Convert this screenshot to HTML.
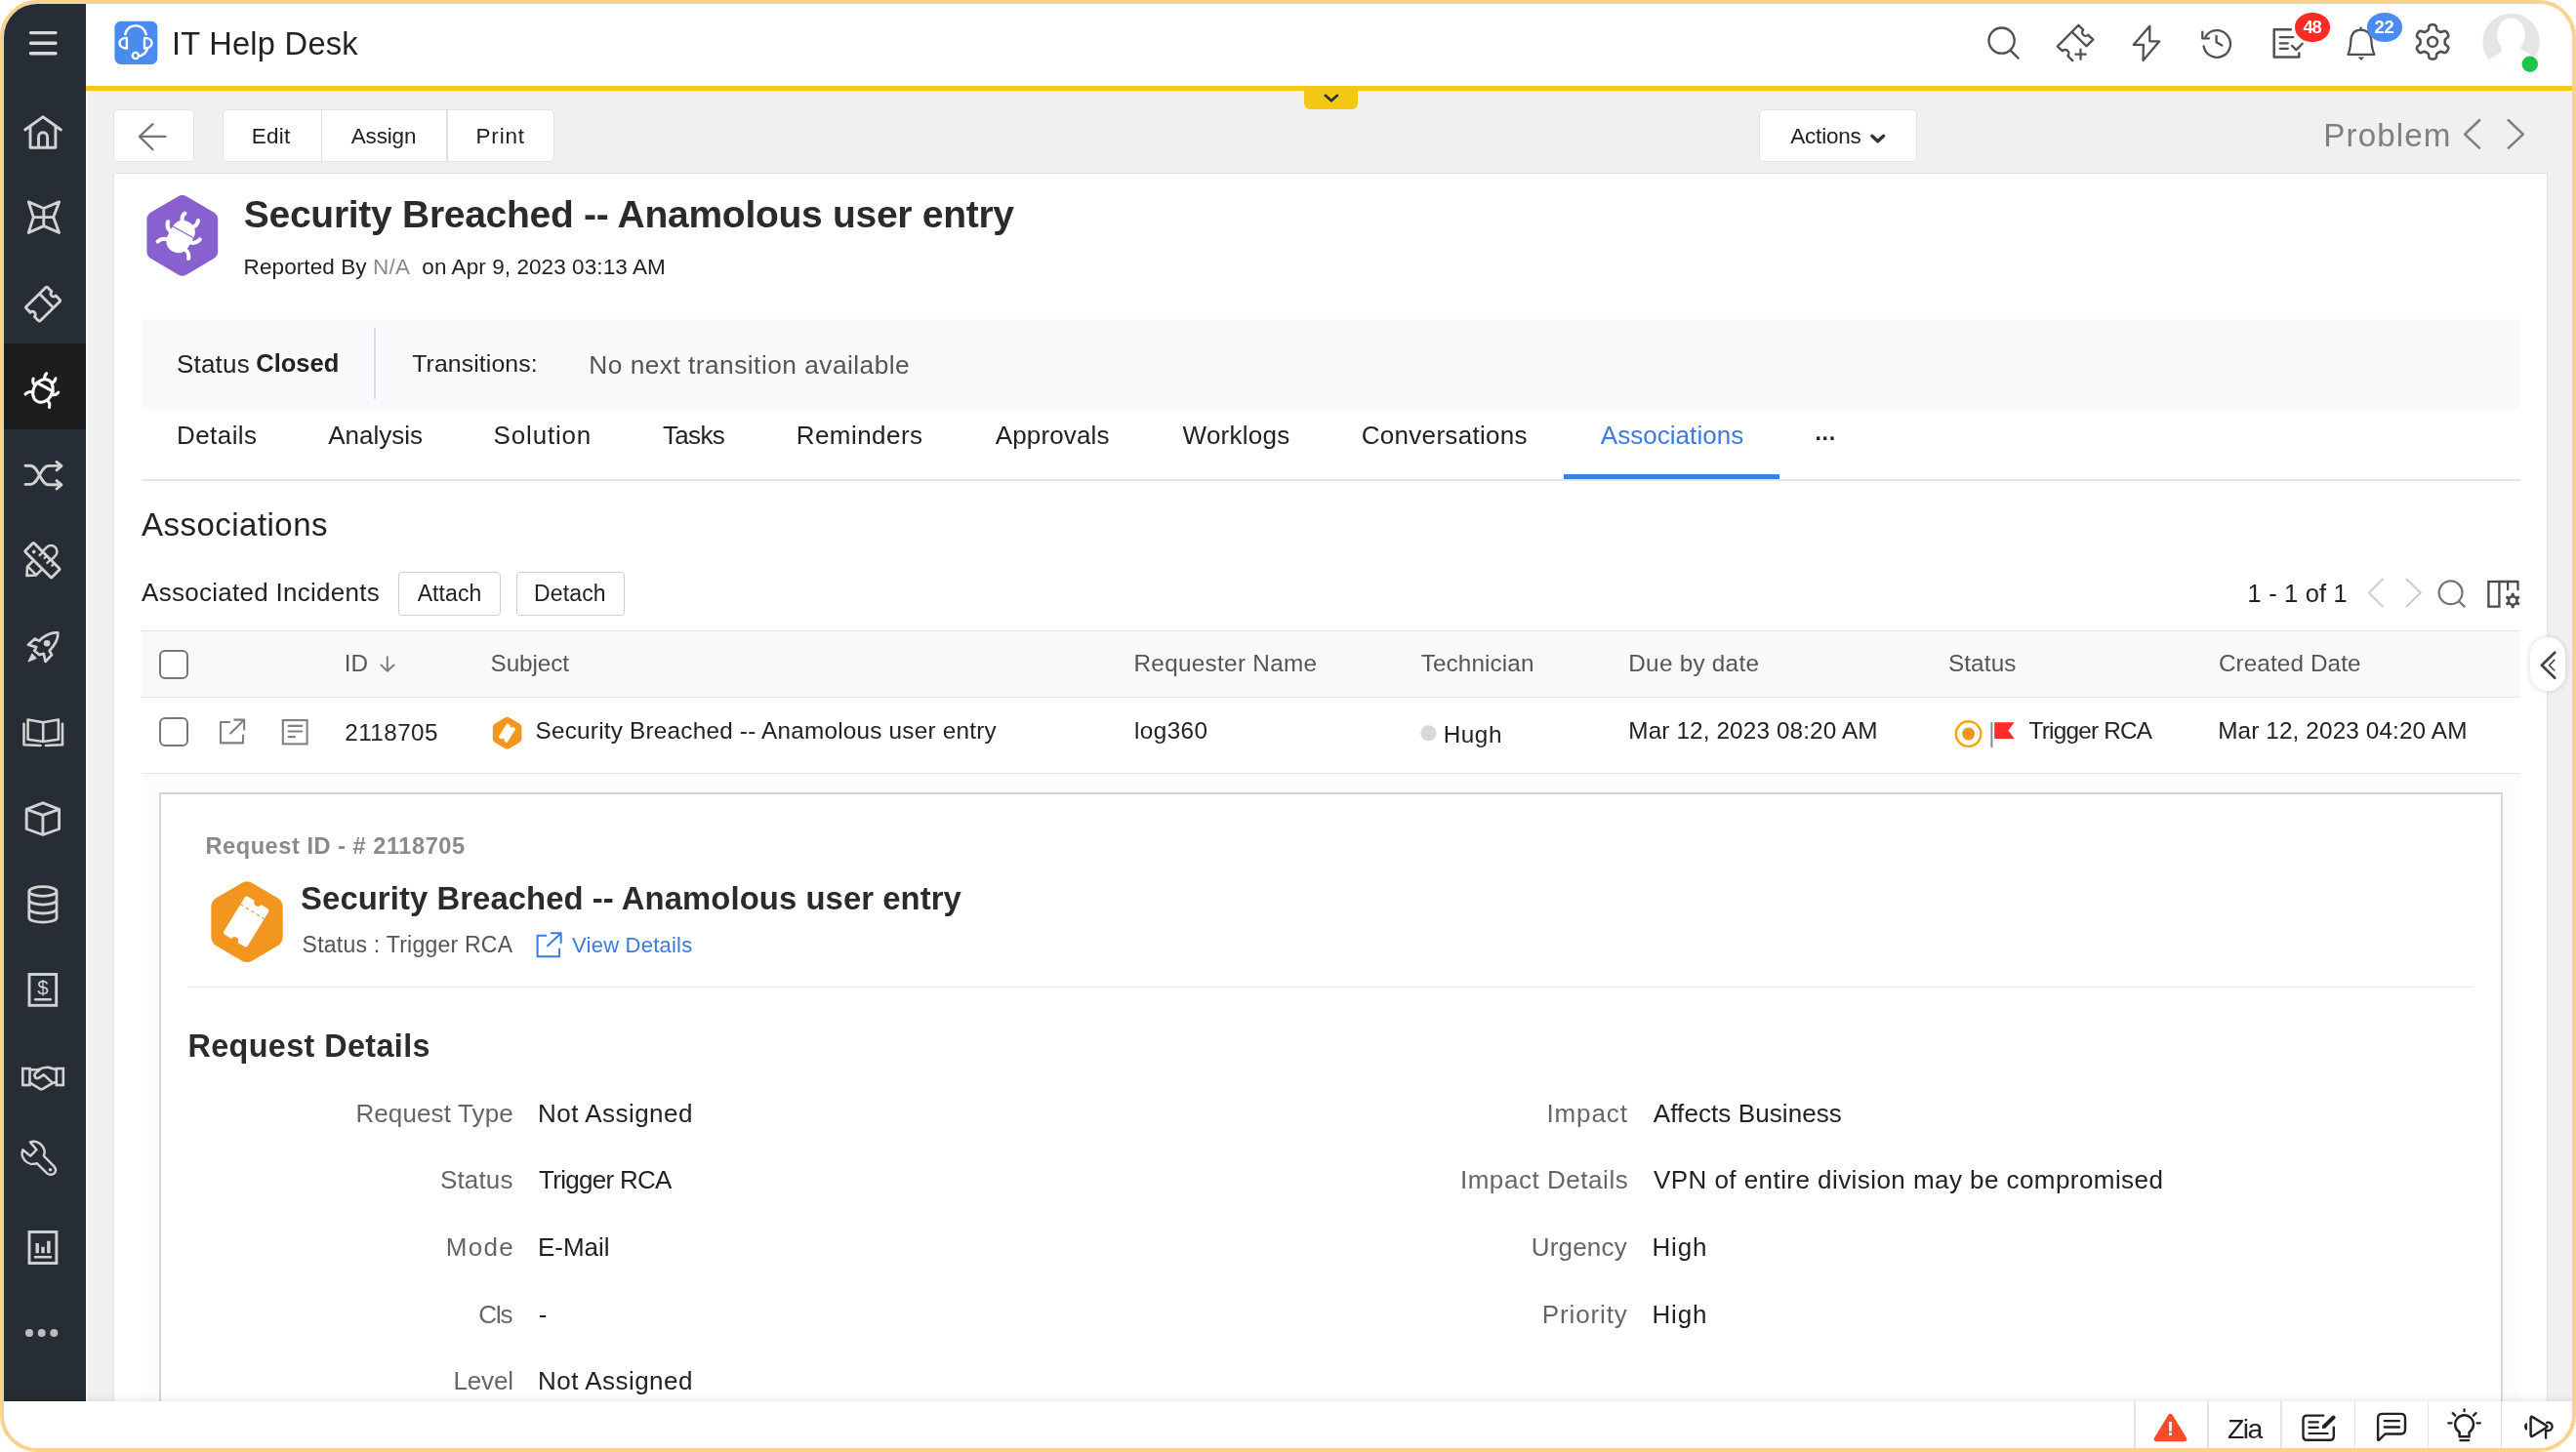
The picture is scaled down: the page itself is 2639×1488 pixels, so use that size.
<!DOCTYPE html>
<html lang="en"><head><meta charset="utf-8"><title>IT Help Desk - Problem</title>
<style>
html,body{margin:0;padding:0;background:#fff;}
body{width:2639px;height:1488px;overflow:hidden;position:relative;font-family:"Liberation Sans",sans-serif;}
#frame{position:absolute;left:0;top:0;width:2639px;height:1488px;box-sizing:border-box;border:4px solid #f9d28e;border-radius:38px;overflow:hidden;background:#f0f0f0;}
#in{position:absolute;left:-4px;top:-4px;width:2639px;height:1488px;will-change:transform;}
.t{position:absolute;white-space:nowrap;}
.b{position:absolute;box-sizing:border-box;}
.i{position:absolute;overflow:visible;}
</style></head>
<body>
<div id="frame"><div id="in">
<div class="b" style="left:0px;top:0px;width:87.7px;height:1436px;background:#262d35;"></div>
<div class="b" style="left:87.7px;top:93.5px;width:2.0px;height:1342.5px;background:#fbfbfb;"></div>
<div class="b" style="left:4px;top:352px;width:84px;height:88px;background:#1b1d1e;"></div>
<div class="b" style="left:88px;top:0px;width:2551px;height:88px;background:#fff;"></div>
<div class="b" style="left:88px;top:88px;width:2551px;height:5.299999999999997px;background:#f4c814;"></div>
<div class="b" style="left:1336px;top:93px;width:55px;height:19px;background:#f4c814;border-radius:0 0 6px 6px;"></div>
<div class="b" style="left:116px;top:177px;width:2494px;height:1263px;background:#fff;border:1.5px solid #e3e3e3;"></div>
<div class="b" style="left:116px;top:112px;width:83px;height:54px;background:#fff;border:1.5px solid #e2e2e2;border-radius:5px;"></div>
<div class="b" style="left:228px;top:112px;width:340px;height:54px;background:#fff;border:1.5px solid #e2e2e2;border-radius:5px;"></div>
<div class="b" style="left:328.5px;top:113px;width:1.5px;height:52px;background:#e2e2e2;"></div>
<div class="b" style="left:457px;top:113px;width:1.5px;height:52px;background:#e2e2e2;"></div>
<div class="b" style="left:1802px;top:112px;width:162px;height:54px;background:#fff;border:1.5px solid #e2e2e2;border-radius:5px;"></div>
<div class="b" style="left:145px;top:327px;width:2437px;height:91.5px;background:#f8f9fb;"></div>
<div class="b" style="left:383px;top:336px;width:1.5px;height:73px;background:#dcdde0;"></div>
<div class="b" style="left:145px;top:490.5px;width:2437px;height:2.0px;background:#e6e6e6;"></div>
<div class="b" style="left:1602px;top:486px;width:221px;height:4.5px;background:#3b7fe4;"></div>
<div class="b" style="left:145px;top:646px;width:2437px;height:68.5px;background:#f8f9fb;border-top:1.5px solid #e3e4e6;border-bottom:1.5px solid #e3e4e6;"></div>
<div class="b" style="left:145px;top:791.5px;width:2437px;height:1.5px;background:#e6e6e6;"></div>
<div class="b" style="left:145px;top:793px;width:2437px;height:647px;background:#fcfcfc;"></div>
<div class="b" style="left:163px;top:812px;width:2400.5px;height:633px;background:#fff;border:2px solid #d6d6d6;"></div>
<div class="b" style="left:193px;top:1010.5px;width:2341px;height:1.5px;background:#e6e6e6;"></div>
<div class="b" style="left:407.5px;top:586px;width:105.0px;height:44.5px;background:#fff;border:1.5px solid #cfcfcf;border-radius:4px;"></div>
<div class="b" style="left:528.5px;top:586px;width:111.5px;height:44.5px;background:#fff;border:1.5px solid #cfcfcf;border-radius:4px;"></div>
<div class="b" style="left:163px;top:666px;width:29.5px;height:29.5px;background:#fff;border:2px solid #777;border-radius:6px;"></div>
<div class="b" style="left:163px;top:735px;width:29.5px;height:29.5px;background:#fff;border:2px solid #777;border-radius:6px;"></div>
<div class="b" style="left:2592.3px;top:653px;width:35.69999999999982px;height:55.299999999999955px;background:#fff;border-radius:18px;box-shadow:0 0 6px rgba(0,0,0,.16);"></div>
<div class="b" style="left:0px;top:1436px;width:2639px;height:52px;background:#fff;box-shadow:0 -2px 7px rgba(0,0,0,.09);"></div>
<div class="b" style="left:2186.25px;top:1436px;width:1.5px;height:52px;background:#e4e4e4;"></div>
<div class="b" style="left:2261.25px;top:1436px;width:1.5px;height:52px;background:#e4e4e4;"></div>
<div class="b" style="left:2336.25px;top:1436px;width:1.5px;height:52px;background:#e4e4e4;"></div>
<div class="b" style="left:2411.75px;top:1436px;width:1.5px;height:52px;background:#e4e4e4;"></div>
<div class="b" style="left:2486.75px;top:1436px;width:1.5px;height:52px;background:#e4e4e4;"></div>
<div class="b" style="left:2561.75px;top:1436px;width:1.5px;height:52px;background:#e4e4e4;"></div>
<div class="t" style="left:175.9px;top:29.0px;font-size:32.6px;line-height:32.6px;color:#222;letter-spacing:0.28px;">IT Help Desk</div>
<div class="t" style="left:257.7px;top:129.3px;font-size:22.5px;line-height:22.5px;color:#222;letter-spacing:0.23px;">Edit</div>
<div class="t" style="left:359.7px;top:129.3px;font-size:22.5px;line-height:22.5px;color:#222;letter-spacing:-0.15px;">Assign</div>
<div class="t" style="left:487.6px;top:129.3px;font-size:22.5px;line-height:22.5px;color:#222;letter-spacing:0.77px;">Print</div>
<div class="t" style="left:1834.2px;top:129.0px;font-size:22.5px;line-height:22.5px;color:#222;letter-spacing:-0.19px;">Actions</div>
<div class="t" style="left:2380.3px;top:122.1px;font-size:33.2px;line-height:33.2px;color:#808080;letter-spacing:1.09px;">Problem</div>
<div class="t" style="left:249.8px;top:199.6px;font-size:39px;line-height:39px;color:#2b2b2b;letter-spacing:-0.28px;font-weight:700;">Security Breached -- Anamolous user entry</div>
<div class="t" style="left:249.6px;top:263.0px;font-size:22.5px;line-height:22.5px;color:#222;letter-spacing:0.09px;">Reported By</div>
<div class="t" style="left:382.0px;top:263.0px;font-size:22.5px;line-height:22.5px;color:#8a8a8a;letter-spacing:0.22px;">N/A</div>
<div class="t" style="left:432.3px;top:263.0px;font-size:22.5px;line-height:22.5px;color:#222;letter-spacing:0.08px;">on Apr 9, 2023 03:13 AM</div>
<div class="t" style="left:180.9px;top:359.6px;font-size:26px;line-height:26px;color:#222;letter-spacing:0.21px;">Status</div>
<div class="t" style="left:262.3px;top:360.0px;font-size:25.5px;line-height:25.5px;color:#222;letter-spacing:-0.01px;font-weight:700;">Closed</div>
<div class="t" style="left:422.3px;top:360.6px;font-size:24.8px;line-height:24.8px;color:#222;letter-spacing:0.10px;">Transitions:</div>
<div class="t" style="left:603.3px;top:360.7px;font-size:26.3px;line-height:26.3px;color:#555;letter-spacing:0.47px;">No next transition available</div>
<div class="t" style="left:181.0px;top:433.4px;font-size:26px;line-height:26px;color:#222;letter-spacing:0.43px;">Details</div>
<div class="t" style="left:336.3px;top:433.4px;font-size:26px;line-height:26px;color:#222;letter-spacing:-0.02px;">Analysis</div>
<div class="t" style="left:505.6px;top:433.4px;font-size:26px;line-height:26px;color:#222;letter-spacing:0.82px;">Solution</div>
<div class="t" style="left:679.0px;top:433.4px;font-size:26px;line-height:26px;color:#222;letter-spacing:-0.67px;">Tasks</div>
<div class="t" style="left:815.7px;top:433.4px;font-size:26px;line-height:26px;color:#222;letter-spacing:0.45px;">Reminders</div>
<div class="t" style="left:1019.8px;top:433.4px;font-size:26px;line-height:26px;color:#222;letter-spacing:0.13px;">Approvals</div>
<div class="t" style="left:1211.6px;top:433.4px;font-size:26px;line-height:26px;color:#222;letter-spacing:0.24px;">Worklogs</div>
<div class="t" style="left:1394.7px;top:433.4px;font-size:26px;line-height:26px;color:#222;letter-spacing:0.31px;">Conversations</div>
<div class="t" style="left:1639.8px;top:433.4px;font-size:26px;line-height:26px;color:#3a7be0;letter-spacing:0.04px;">Associations</div>
<div class="t" style="left:1859.5px;top:432.0px;font-size:23px;line-height:23px;color:#222;letter-spacing:0.70px;font-weight:700;">...</div>
<div class="t" style="left:145.1px;top:521.1px;font-size:33px;line-height:33px;color:#222;letter-spacing:0.47px;">Associations</div>
<div class="t" style="left:145.1px;top:594.3px;font-size:26px;line-height:26px;color:#222;letter-spacing:0.27px;">Associated Incidents</div>
<div class="t" style="left:427.7px;top:596.9px;font-size:23px;line-height:23px;color:#222;letter-spacing:0.07px;">Attach</div>
<div class="t" style="left:547.0px;top:596.9px;font-size:23px;line-height:23px;color:#222;letter-spacing:0.15px;">Detach</div>
<div class="t" style="left:2302.6px;top:595.8px;font-size:25.5px;line-height:25.5px;color:#222;letter-spacing:0.17px;">1 - 1 of 1</div>
<div class="t" style="left:352.8px;top:667.6px;font-size:24.3px;line-height:24.3px;color:#555;letter-spacing:-0.02px;">ID</div>
<div class="t" style="left:502.5px;top:668.4px;font-size:24.3px;line-height:24.3px;color:#555;letter-spacing:-0.07px;">Subject</div>
<div class="t" style="left:1161.5px;top:668.4px;font-size:24.3px;line-height:24.3px;color:#555;letter-spacing:0.30px;">Requester Name</div>
<div class="t" style="left:1455.7px;top:668.4px;font-size:24.3px;line-height:24.3px;color:#555;letter-spacing:0.11px;">Technician</div>
<div class="t" style="left:1668.3px;top:668.4px;font-size:24.3px;line-height:24.3px;color:#555;letter-spacing:0.26px;">Due by date</div>
<div class="t" style="left:1995.9px;top:668.4px;font-size:24.3px;line-height:24.3px;color:#555;letter-spacing:0.13px;">Status</div>
<div class="t" style="left:2272.9px;top:668.4px;font-size:24.3px;line-height:24.3px;color:#555;letter-spacing:0.11px;">Created Date</div>
<div class="t" style="left:353.3px;top:738.9px;font-size:24.3px;line-height:24.3px;color:#222;letter-spacing:0.41px;">2118705</div>
<div class="t" style="left:548.6px;top:737.1px;font-size:24.3px;line-height:24.3px;color:#222;letter-spacing:0.22px;">Security Breached -- Anamolous user entry</div>
<div class="t" style="left:1162.1px;top:737.0px;font-size:24.3px;line-height:24.3px;color:#222;letter-spacing:0.37px;">log360</div>
<div class="t" style="left:1478.7px;top:740.6px;font-size:24.3px;line-height:24.3px;color:#222;letter-spacing:0.54px;">Hugh</div>
<div class="t" style="left:1668.3px;top:737.1px;font-size:24.3px;line-height:24.3px;color:#222;letter-spacing:0.13px;">Mar 12, 2023 08:20 AM</div>
<div class="t" style="left:2078.5px;top:737.1px;font-size:24.3px;line-height:24.3px;color:#222;letter-spacing:-0.76px;">Trigger RCA</div>
<div class="t" style="left:2272.2px;top:737.1px;font-size:24.3px;line-height:24.3px;color:#222;letter-spacing:0.13px;">Mar 12, 2023 04:20 AM</div>
<div class="t" style="left:210.5px;top:856.2px;font-size:23.6px;line-height:23.6px;color:#8a8a8a;letter-spacing:0.53px;font-weight:700;">Request ID - # 2118705</div>
<div class="t" style="left:308.1px;top:904.5px;font-size:32.8px;line-height:32.8px;color:#2b2b2b;letter-spacing:0.09px;font-weight:700;">Security Breached -- Anamolous user entry</div>
<div class="t" style="left:309.6px;top:957.4px;font-size:23px;line-height:23px;color:#555;letter-spacing:0.24px;">Status : Trigger RCA</div>
<div class="t" style="left:586.1px;top:958.3px;font-size:22px;line-height:22px;color:#3a7be0;letter-spacing:0.22px;">View Details</div>
<div class="t" style="left:192.4px;top:1056.2px;font-size:32.3px;line-height:32.3px;color:#2b2b2b;letter-spacing:0.42px;font-weight:700;">Request Details</div>
<div class="t" style="left:364.4px;top:1127.8px;font-size:26px;line-height:26px;color:#666;letter-spacing:0.12px;">Request Type</div>
<div class="t" style="left:451.0px;top:1196.4px;font-size:26px;line-height:26px;color:#666;letter-spacing:0.15px;">Status</div>
<div class="t" style="left:456.7px;top:1265.0px;font-size:26px;line-height:26px;color:#666;letter-spacing:1.31px;">Mode</div>
<div class="t" style="left:490.3px;top:1333.6px;font-size:26px;line-height:26px;color:#666;letter-spacing:-1.90px;">CIs</div>
<div class="t" style="left:464.4px;top:1402.4px;font-size:26px;line-height:26px;color:#666;letter-spacing:-0.10px;">Level</div>
<div class="t" style="left:551.1px;top:1127.8px;font-size:26px;line-height:26px;color:#222;letter-spacing:0.46px;">Not Assigned</div>
<div class="t" style="left:552.1px;top:1196.4px;font-size:26px;line-height:26px;color:#222;letter-spacing:-0.72px;">Trigger RCA</div>
<div class="t" style="left:551.1px;top:1265.0px;font-size:26px;line-height:26px;color:#222;letter-spacing:-0.07px;">E-Mail</div>
<div class="t" style="left:551.8px;top:1333.6px;font-size:26px;line-height:26px;color:#222;">-</div>
<div class="t" style="left:551.1px;top:1402.4px;font-size:26px;line-height:26px;color:#222;letter-spacing:0.46px;">Not Assigned</div>
<div class="t" style="left:1584.5px;top:1127.8px;font-size:26px;line-height:26px;color:#666;letter-spacing:0.87px;">Impact</div>
<div class="t" style="left:1495.9px;top:1196.4px;font-size:26px;line-height:26px;color:#666;letter-spacing:0.55px;">Impact Details</div>
<div class="t" style="left:1568.8px;top:1265.0px;font-size:26px;line-height:26px;color:#666;letter-spacing:0.18px;">Urgency</div>
<div class="t" style="left:1579.8px;top:1333.6px;font-size:26px;line-height:26px;color:#666;letter-spacing:0.87px;">Priority</div>
<div class="t" style="left:1693.8px;top:1127.8px;font-size:26px;line-height:26px;color:#222;letter-spacing:0.09px;">Affects Business</div>
<div class="t" style="left:1694.0px;top:1196.4px;font-size:26px;line-height:26px;color:#222;letter-spacing:0.44px;">VPN of entire division may be compromised</div>
<div class="t" style="left:1692.4px;top:1265.0px;font-size:26px;line-height:26px;color:#222;letter-spacing:0.90px;">High</div>
<div class="t" style="left:1692.4px;top:1333.6px;font-size:26px;line-height:26px;color:#222;letter-spacing:0.90px;">High</div>
<svg class="i" style="left:26px;top:28px;" width="36" height="32" viewBox="26 28 36 32"><path d="M31.5 33.6H57 M31.5 44.2H57 M31.5 54.8H57" fill="none" stroke="#d9d9d9" stroke-width="3.4" stroke-linecap="round" stroke-linejoin="round" /></svg>
<svg class="i" style="left:117px;top:21px;" width="45" height="46" viewBox="117 21 45 46"><rect x="117.4" y="21.8" width="43.9" height="44.1" rx="6.3" fill="#4a8bf0"/><path d="M128.2 35.3A10.9 10.9 0 0 1 149.7 35.3" fill="none" stroke="#fff" stroke-width="2.5" stroke-linecap="round" stroke-linejoin="round" /><path d="M129.9 38.9V49.5C125 49.5 122.5 47 122.5 44.2S125 38.9 129.9 38.9Z" fill="none" stroke="#fff" stroke-width="2.4" stroke-linecap="round" stroke-linejoin="round" /><path d="M148 38.9V49.5C153 49.5 155.5 47 155.5 44.2S153 38.9 148 38.9Z" fill="none" stroke="#fff" stroke-width="2.4" stroke-linecap="round" stroke-linejoin="round" /><path d="M151 50C149.5 54.5 146 57 142 57.6" fill="none" stroke="#fff" stroke-width="2.4" stroke-linecap="round" stroke-linejoin="round" /><circle cx="138.9" cy="57" r="3.1" fill="none" stroke="#fff" stroke-width="2.4"/></svg>
<svg class="i" style="left:2034px;top:24px;" width="38" height="40" viewBox="2034 24 38 40"><circle cx="2050.6" cy="41.6" r="13.1" fill="none" stroke="#505050" stroke-width="2.3"/><path d="M2059.9 51.9L2067.6 59.6" fill="none" stroke="#505050" stroke-width="2.3" stroke-linecap="round" stroke-linejoin="round" /></svg>
<svg class="i" style="left:2104px;top:22px;" width="44" height="44" viewBox="2104 22 44 44"><path d="M2123.3 62.1L2118.4 57.4A3.6 3.6 0 0 0 2112.8 52.2L2107.8 47.6L2129.3 25.8L2134.2 30.6A3.6 3.6 0 0 0 2139.3 35.8L2144.3 40.6L2137.4 47.3L2123.6 33.6" fill="none" stroke="#505050" stroke-width="2.3" stroke-linecap="round" stroke-linejoin="round" /><path d="M2131.5 50.6V60.8M2126.4 55.7H2136.6" fill="none" stroke="#505050" stroke-width="2.3" stroke-linecap="round" stroke-linejoin="round" /></svg>
<svg class="i" style="left:2180px;top:22px;" width="36" height="44" viewBox="2180 22 36 44"><path d="M2202.3 26.7L2185.7 45.9H2195.9L2195.5 62.1L2212.2 42.3H2202.3Z" fill="none" stroke="#505050" stroke-width="2.3" stroke-linecap="round" stroke-linejoin="round" /></svg>
<svg class="i" style="left:2252px;top:26px;" width="38" height="36" viewBox="2252 26 38 36"><path d="M2257.6 47.5A13.8 13.8 0 1 0 2259.7 37.3" fill="none" stroke="#505050" stroke-width="2.3" stroke-linecap="round" stroke-linejoin="round" /><path d="M2256.3 32.7V39.4H2263" fill="none" stroke="#505050" stroke-width="2.3" stroke-linecap="round" stroke-linejoin="round" /><path d="M2270.6 36.8V43.2L2276.3 46.6" fill="none" stroke="#505050" stroke-width="2.3" stroke-linecap="round" stroke-linejoin="round" /></svg>
<svg class="i" style="left:2326px;top:26px;" width="36" height="36" viewBox="2326 26 36 36"><path d="M2346.8 30.2H2329.7V58.4H2355.3V54.5" fill="none" stroke="#505050" stroke-width="2.5" stroke-linecap="round" stroke-linejoin="round" stroke-linecap="butt"/><path d="M2335.7 38.1H2349.3M2335.7 44.3H2343.8M2335.7 49.8H2343.8" fill="none" stroke="#505050" stroke-width="2.3" stroke-linecap="round" stroke-linejoin="round" /><path d="M2348 46.8L2352.3 51.1L2358.7 44.7" fill="none" stroke="#505050" stroke-width="2.3" stroke-linecap="round" stroke-linejoin="round" /></svg>
<div class="b" style="left:2351px;top:13px;width:36px;height:29.5px;border-radius:50%;background:#fb2c24;"></div>
<div class="t" style="left:2359.4px;top:18.5px;font-size:18.5px;line-height:18.5px;color:#fff;letter-spacing:-1.09px;font-weight:700;">48</div>
<svg class="i" style="left:2402px;top:24px;" width="34" height="42" viewBox="2402 24 34 42"><path d="M2418.6 30.6V28.6M2418.6 30.6C2411 30.6 2408.6 36.5 2408.3 42C2408 48 2407 52.5 2405.5 55.8H2432.4C2430.8 52.5 2429.8 48 2429.4 42C2429 36.5 2426 30.6 2418.6 30.6Z" fill="none" stroke="#505050" stroke-width="2.3" stroke-linecap="round" stroke-linejoin="round" /><path d="M2415.6 58.6H2422.2L2418.9 62Z" fill="#505050"/></svg>
<div class="b" style="left:2424.5px;top:13px;width:36px;height:29.5px;border-radius:50%;background:#4a8bf0;"></div>
<div class="t" style="left:2432.6px;top:18.5px;font-size:18.5px;line-height:18.5px;color:#fff;letter-spacing:-0.43px;font-weight:700;">22</div>
<svg class="i" style="left:2472px;top:22px;" width="40" height="42" viewBox="2472 22 40 42"><path d="M2504.7 42.9L2504.7 42.6L2504.7 42.2L2504.7 41.9L2504.7 41.6L2504.7 41.2L2504.8 40.9L2505.0 40.5L2505.4 40.1L2506.0 39.6L2506.7 39.0L2507.4 38.4L2507.9 37.8L2508.2 37.2L2508.3 36.7L2508.2 36.2L2508.1 35.8L2508.0 35.3L2507.8 34.9L2507.6 34.5L2507.3 34.1L2507.1 33.7L2506.8 33.3L2506.6 33.0L2506.3 32.6L2505.9 32.3L2505.5 32.0L2505.1 31.8L2504.4 31.8L2503.7 31.9L2502.8 32.2L2501.9 32.6L2501.2 32.8L2500.6 32.9L2500.2 32.9L2499.9 32.8L2499.6 32.6L2499.3 32.5L2499.0 32.3L2498.7 32.2L2498.4 32.0L2498.1 31.8L2497.8 31.7L2497.5 31.5L2497.3 31.3L2497.0 31.1L2496.7 30.9L2496.5 30.5L2496.3 30.0L2496.1 29.2L2496.0 28.3L2495.8 27.4L2495.6 26.6L2495.2 26.1L2494.8 25.8L2494.4 25.6L2493.9 25.5L2493.5 25.4L2493.0 25.3L2492.6 25.3L2492.1 25.3L2491.6 25.3L2491.2 25.3L2490.7 25.4L2490.3 25.5L2489.8 25.6L2489.4 25.8L2489.0 26.1L2488.6 26.6L2488.4 27.4L2488.2 28.3L2488.1 29.2L2487.9 30.0L2487.7 30.5L2487.5 30.9L2487.2 31.1L2486.9 31.3L2486.7 31.5L2486.4 31.7L2486.1 31.8L2485.8 32.0L2485.5 32.2L2485.2 32.3L2484.9 32.5L2484.6 32.6L2484.3 32.8L2484.0 32.9L2483.6 32.9L2483.0 32.8L2482.3 32.6L2481.4 32.2L2480.5 31.9L2479.8 31.8L2479.1 31.8L2478.7 32.0L2478.3 32.3L2477.9 32.6L2477.6 33.0L2477.4 33.3L2477.1 33.7L2476.9 34.1L2476.6 34.5L2476.4 34.9L2476.2 35.3L2476.1 35.8L2476.0 36.2L2475.9 36.7L2476.0 37.2L2476.3 37.8L2476.8 38.4L2477.5 39.0L2478.2 39.6L2478.8 40.1L2479.2 40.5L2479.4 40.9L2479.5 41.2L2479.5 41.6L2479.5 41.9L2479.5 42.2L2479.5 42.6L2479.5 42.9L2479.5 43.2L2479.5 43.6L2479.5 43.9L2479.5 44.2L2479.5 44.6L2479.4 44.9L2479.2 45.3L2478.8 45.7L2478.2 46.2L2477.5 46.8L2476.8 47.4L2476.3 48.0L2476.0 48.6L2475.9 49.1L2476.0 49.6L2476.1 50.0L2476.2 50.5L2476.4 50.9L2476.6 51.3L2476.9 51.7L2477.1 52.1L2477.4 52.5L2477.6 52.8L2477.9 53.2L2478.3 53.5L2478.7 53.8L2479.1 54.0L2479.8 54.0L2480.5 53.9L2481.4 53.6L2482.3 53.2L2483.0 53.0L2483.6 52.9L2484.0 52.9L2484.3 53.0L2484.6 53.2L2484.9 53.3L2485.2 53.5L2485.5 53.6L2485.8 53.8L2486.1 54.0L2486.4 54.1L2486.7 54.3L2486.9 54.5L2487.2 54.7L2487.5 54.9L2487.7 55.3L2487.9 55.8L2488.1 56.6L2488.2 57.5L2488.4 58.4L2488.6 59.2L2489.0 59.7L2489.4 60.0L2489.8 60.2L2490.3 60.3L2490.7 60.4L2491.2 60.5L2491.6 60.5L2492.1 60.5L2492.6 60.5L2493.0 60.5L2493.5 60.4L2493.9 60.3L2494.4 60.2L2494.8 60.0L2495.2 59.7L2495.6 59.2L2495.8 58.4L2496.0 57.5L2496.1 56.6L2496.3 55.8L2496.5 55.3L2496.7 54.9L2497.0 54.7L2497.3 54.5L2497.5 54.3L2497.8 54.1L2498.1 54.0L2498.4 53.8L2498.7 53.6L2499.0 53.5L2499.3 53.3L2499.6 53.2L2499.9 53.0L2500.2 52.9L2500.6 52.9L2501.2 53.0L2501.9 53.2L2502.8 53.6L2503.7 53.9L2504.4 54.0L2505.1 54.0L2505.5 53.8L2505.9 53.5L2506.3 53.2L2506.6 52.8L2506.8 52.5L2507.1 52.1L2507.3 51.7L2507.6 51.3L2507.8 50.9L2508.0 50.5L2508.1 50.0L2508.2 49.6L2508.3 49.1L2508.2 48.6L2507.9 48.0L2507.4 47.4L2506.7 46.8L2506.0 46.2L2505.4 45.7L2505.0 45.3L2504.8 44.9L2504.7 44.6L2504.7 44.2L2504.7 43.9L2504.7 43.6L2504.7 43.2Z" fill="none" stroke="#505050" stroke-width="2.6" stroke-linecap="round" stroke-linejoin="round" /><circle cx="2492.1" cy="42.9" r="4.9" fill="none" stroke="#505050" stroke-width="2.6"/></svg>
<svg class="i" style="left:2542px;top:12px;" width="62" height="64" viewBox="2542 12 62 64"><defs><clipPath id="av"><circle cx="2572.6" cy="43" r="29.2"/></clipPath></defs><circle cx="2572.6" cy="43" r="29.2" fill="#e5e5e6"/><g clip-path="url(#av)"><ellipse cx="2572.5" cy="35.8" rx="14.3" ry="17.2" fill="#fff"/><path d="M2562.6 48V53.2L2545.5 63.5V80H2602V61.5L2582.2 50.3V48Z" fill="#fff"/></g><circle cx="2591.8" cy="65.7" r="9.2" fill="#fff"/><circle cx="2591.8" cy="65.7" r="8.2" fill="#1ec44a"/></svg>
<svg class="i" style="left:1355px;top:95px;" width="18" height="12" viewBox="1355 95 18 12"><path d="M1357.8 97.8L1363.9 103.3L1370 97.8" fill="none" stroke="#2a2f36" stroke-width="2.6" stroke-linecap="round" stroke-linejoin="round" /></svg>
<svg class="i" style="left:1912px;top:134px;" width="24" height="16" viewBox="1912 134 24 16"><path d="M1917.8 139.2L1923.7 144.8L1929.6 139.2" fill="none" stroke="#333" stroke-width="3.4" stroke-linecap="round" stroke-linejoin="round" /></svg>
<svg class="i" style="left:138px;top:122px;" width="36" height="36" viewBox="138 122 36 36"><path d="M169.5 139.9H143.2M156.5 127.2L142.9 139.9L156.5 153.2" fill="none" stroke="#747474" stroke-width="2.3" stroke-linecap="round" stroke-linejoin="round" /></svg>
<svg class="i" style="left:148px;top:197px;" width="78" height="89" viewBox="148 197 78 89"><path d="M182.5 201.2Q186.8 198.7 191.1 201.2L218.9 217.5Q223.2 220.0 223.2 225.0L223.2 257.6Q223.2 262.6 218.9 265.1L191.1 281.4Q186.8 283.9 182.5 281.4L154.7 265.1Q150.4 262.6 150.4 257.6L150.4 225.0Q150.4 220.0 154.7 217.5Z" fill="#8860d0"/><g transform="translate(185.4 241.8) rotate(29) scale(1.06)"><path d="M-11.5 -3.5C-11.5 -11 -7 -15.5 0 -15.5S11.5 -11 11.5 -3.5V4C11.5 12 7 17 0 17S-11.5 12 -11.5 4Z" fill="#fff"/><path d="M-12 -4.2H12" stroke="#8860d0" stroke-width="1.1" fill="none"/><path d="M-5.5 -13C-7.8 -15.2 -8.4 -18 -7.3 -21 M5.5 -13C7.8 -15.2 8.4 -18 7.3 -21 M-11 1C-14.5 0.3 -16.8 -2 -17.6 -6 M11 1C14.5 0.3 16.8 -2 17.6 -6 M-10 9.5C-13.6 10 -15.8 12 -17 15.6 M10 9.5C13.6 10 15.8 12 17 15.6" stroke="#fff" stroke-width="3.8" stroke-linecap="round" fill="none"/></g></svg>
<svg class="i" style="left:214px;top:901px;" width="78" height="88" viewBox="214 901 78 88"><path d="M247.4 905.0Q253.0 901.7 258.6 905.0L284.1 919.9Q289.7 923.2 289.7 929.7L289.7 959.7Q289.7 966.2 284.1 969.5L258.6 984.4Q253.0 987.7 247.4 984.4L221.9 969.5Q216.3 966.2 216.3 959.7L216.3 929.7Q216.3 923.2 221.9 919.9Z" fill="#f29620"/><g transform="translate(252.2 944.5) rotate(31.5)"><path d="M-11.8 -22.8H-3.8A3.8 3.8 0 0 0 3.8 -22.8H11.8Q14.3 -22.8 14.3 -20.3V20.3Q14.3 22.8 11.8 22.8H3.8A3.8 3.8 0 0 0 -3.8 22.8H-11.8Q-14.3 22.8 -14.3 20.3V-20.3Q-14.3 -22.8 -11.8 -22.8Z" fill="#fff"/><path d="M-14.3 -12.084000000000001H14.3" stroke="#f29620" stroke-width="1.1" stroke-dasharray="3.5 3" fill="none"/></g></svg>
<svg class="i" style="left:386px;top:670px;" width="22" height="22" viewBox="386 670 22 22"><path d="M396.8 673.2V687.6M390.4 681.4L396.8 687.8L403.6 681.4" fill="none" stroke="#7a7a7a" stroke-width="1.9" stroke-linecap="round" stroke-linejoin="round" /></svg>
<svg class="i" style="left:222px;top:733px;" width="32" height="33" viewBox="222 733 32 33"><path d="M235.2 740H226V761.4H249V753.5" fill="none" stroke="#808080" stroke-width="2.1" stroke-linecap="round" stroke-linejoin="round" stroke-linecap="butt"/><path d="M236.2 751.6L250 737.8M240.2 737.6H250.2V747.6" fill="none" stroke="#808080" stroke-width="2.1" stroke-linecap="round" stroke-linejoin="round" stroke-linecap="butt" stroke-linejoin="miter"/></svg>
<svg class="i" style="left:286px;top:734px;" width="32" height="32" viewBox="286 734 32 32"><rect x="289.8" y="738.1" width="24.8" height="24.3" fill="none" stroke="#808080" stroke-width="2.1"/><path d="M295.6 743.9H309.2M295.6 749.5H309.2M295.6 755.1H302" fill="none" stroke="#808080" stroke-width="2.1" stroke-linecap="round" stroke-linejoin="round" stroke-linecap="butt"/></svg>
<svg class="i" style="left:503px;top:733px;" width="33" height="36" viewBox="503 733 33 36"><path d="M517.3 735.5Q519.6 734.2 521.9 735.5L532.1 741.4Q534.4 742.7 534.4 745.3L534.4 757.1Q534.4 759.7 532.1 761.0L521.9 766.9Q519.6 768.2 517.3 766.9L507.1 761.0Q504.8 759.7 504.8 757.1L504.8 745.3Q504.8 742.7 507.1 741.4Z" fill="#f29620"/><g transform="translate(519.5 751.2) rotate(31.5)"><path d="M-4.3 -8.5H-1.6A1.6 1.6 0 0 0 1.6 -8.5H4.3Q5.3 -8.5 5.3 -7.5V7.5Q5.3 8.5 4.3 8.5H1.6A1.6 1.6 0 0 0 -1.6 8.5H-4.3Q-5.3 8.5 -5.3 7.5V-7.5Q-5.3 -8.5 -4.3 -8.5Z" fill="#fff"/></g></svg>
<svg class="i" style="left:1454px;top:742px;" width="19" height="19" viewBox="1454 742 19 19"><circle cx="1463.4" cy="751.3" r="8.1" fill="#d9d9da"/></svg>
<svg class="i" style="left:2001px;top:737px;" width="66" height="31" viewBox="2001 737 66 31"><circle cx="2016.6" cy="752.1" r="12.8" fill="#fff" stroke="#f5a60a" stroke-width="2.4"/><circle cx="2016.6" cy="752.1" r="6.5" fill="#f29620"/><rect x="2039.4" y="740" width="2" height="26" fill="#8a8a8a"/><path d="M2043.2 740.2H2063.6L2057.4 748.6L2063.6 757H2043.2Z" fill="#ff2a2a"/></svg>
<svg class="i" style="left:2422px;top:590px;" width="64" height="35" viewBox="2422 590 64 35"><path d="M2440.9 593.5L2426.9 607.5L2440.9 621.5M2465.4 593.5L2479.9 607.5L2465.4 621.5" fill="none" stroke="#cdcdcd" stroke-width="2.1" stroke-linecap="round" stroke-linejoin="round" /></svg>
<svg class="i" style="left:2496px;top:593px;" width="32" height="32" viewBox="2496 593 32 32"><circle cx="2510.6" cy="607.3" r="11.9" fill="none" stroke="#747474" stroke-width="2.2"/><path d="M2519.2 616.3L2524.6 621.6" fill="none" stroke="#747474" stroke-width="2.2" stroke-linecap="round" stroke-linejoin="round" /></svg>
<svg class="i" style="left:2546px;top:592px;" width="40" height="34" viewBox="2546 592 40 34"><rect x="2549.4" y="596" width="11" height="25.6" fill="none" stroke="#4a4a4a" stroke-width="2.3"/><path d="M2560.4 596H2579.5V604.2M2569.1 596V604.2" fill="none" stroke="#4a4a4a" stroke-width="2.3" stroke-linecap="round" stroke-linejoin="round" stroke-linecap="butt" stroke-linejoin="miter"/><path d="M2572.5 610.2L2572.8 607.7L2575.6 607.7L2575.9 610.2L2578.0 611.4L2580.2 610.4L2581.6 612.8L2579.7 614.3L2579.7 616.7L2581.6 618.2L2580.2 620.6L2578.0 619.6L2575.9 620.8L2575.6 623.3L2572.8 623.3L2572.5 620.8L2570.4 619.6L2568.2 620.6L2566.8 618.2L2568.7 616.7L2568.7 614.3L2566.8 612.8L2568.2 610.4L2570.4 611.4ZM2577.2 615.5A3 3 0 1 0 2571.2 615.5A3 3 0 1 0 2577.2 615.5Z" fill="#4a4a4a" fill-rule="evenodd"/></svg>
<svg class="i" style="left:2598px;top:664px;" width="26" height="36" viewBox="2598 664 26 36"><path d="M2617.3 668.7L2603.9 681.7L2617.3 694.7" fill="none" stroke="#444" stroke-width="2.7" stroke-linecap="round" stroke-linejoin="round" stroke-linecap="butt"/><path d="M2616.8 676.4L2611.6 681.7L2616.8 687" fill="none" stroke="#444" stroke-width="1.6" stroke-linecap="round" stroke-linejoin="round" stroke-linecap="butt"/></svg>
<svg class="i" style="left:2520px;top:118px;" width="72" height="40" viewBox="2520 118 72 40"><path d="M2540 123.2L2525.1 137.6L2540 151.6M2569.8 123.2L2584.8 137.6L2569.8 151.6" fill="none" stroke="#808080" stroke-width="2.6" stroke-linecap="round" stroke-linejoin="round" /></svg>
<svg class="i" style="left:547px;top:952px;" width="32" height="32" viewBox="547 952 32 32"><path d="M559.3 958.8H550.6V980.3H573.1V972.6" fill="none" stroke="#3a7be0" stroke-width="2" stroke-linecap="round" stroke-linejoin="round" stroke-linecap="butt"/><path d="M561 969.2L574.5 956.5M565 956.3H574.7V966.1" fill="none" stroke="#3a7be0" stroke-width="2" stroke-linecap="round" stroke-linejoin="round" stroke-linecap="butt" stroke-linejoin="miter"/></svg>
<svg class="i" style="left:22px;top:115px;" width="44" height="41" viewBox="22 115 44 41"><path d="M25.7 133L43.9 119.8L62.4 133" fill="none" stroke="#d2d2d2" stroke-width="2.9" stroke-linecap="round" stroke-linejoin="round" /><path d="M31 130V151.2H56.9V130" fill="none" stroke="#d2d2d2" stroke-width="2.9" stroke-linecap="round" stroke-linejoin="round" stroke-linejoin="miter" stroke-linecap="butt"/><path d="M39.5 151V140.3A4.55 4.55 0 0 1 48.6 140.3V151" fill="none" stroke="#d2d2d2" stroke-width="2.9" stroke-linecap="round" stroke-linejoin="round" stroke-linecap="butt"/></svg>
<svg class="i" style="left:25px;top:202px;" width="40" height="41" viewBox="25 202 40 41"><path d="M29.3 206.9L44.8 213.5L60.6 206.9L54.7 222.6L60.6 238.4L44.8 231.7L29.3 238.4L34.3 222.6Z M44.8 213.5V231.7M34.3 222.6H54.7" fill="none" stroke="#d2d2d2" stroke-width="2.9" stroke-linecap="round" stroke-linejoin="round" /></svg>
<svg class="i" style="left:22px;top:290px;" width="44" height="43" viewBox="22 290 44 43"><g transform="translate(44.1 311.6) rotate(-44.5)"><path d="M-13.700000000000001 -10.2H13.700000000000001Q15.3 -10.2 15.3 -8.6V-3.1A3.1 3.1 0 0 0 15.3 3.1V8.6Q15.3 10.2 13.700000000000001 10.2H-13.700000000000001Q-15.3 10.2 -15.3 8.6V3.1A3.1 3.1 0 0 0 -15.3 -3.1V-8.6Q-15.3 -10.2 -13.700000000000001 -10.2Z M4.8 -10.2V10.2" fill="none" stroke="#d2d2d2" stroke-width="2.9" stroke-linecap="round" stroke-linejoin="round" /></g></svg>
<svg class="i" style="left:22px;top:378px;" width="44" height="42" viewBox="22 378 44 42"><g transform="translate(44.4 399.6) rotate(29)"><ellipse cx="0" cy="1" rx="9.6" ry="12.3" fill="none" stroke="#fff" stroke-width="3.1"/><path d="M-9.4 -3.4H9.4 M-4.3 -10.5C-5.6 -12.3 -5.9 -14.2 -5.3 -16.4 M4.3 -10.5C5.6 -12.3 5.9 -14.2 5.3 -16.4 M-9.6 0C-12.3 -0.4 -14 -2.2 -14.6 -5.2 M9.6 0C12.3 -0.4 14 -2.2 14.6 -5.2 M-8.5 7.5C-11.4 7.9 -13.2 9.6 -14 12.6 M8.5 7.5C11.4 7.9 13.2 9.6 14 12.6" fill="none" stroke="#fff" stroke-width="3.1" stroke-linecap="round" stroke-linejoin="round" /></g></svg>
<svg class="i" style="left:22px;top:470px;" width="45" height="34" viewBox="22 470 45 34"><path d="M26 477.3H31C40 477.3 41 496.8 50 496.8H62.5 M26 496.4H31C40 496.4 41 477.4 50 477.4H62.5 M58 473.4L63 477.4L58 481.8 M58 492.6L63 496.8L58 501" fill="none" stroke="#d2d2d2" stroke-width="2.9" stroke-linecap="round" stroke-linejoin="round" /></svg>
<svg class="i" style="left:22px;top:553px;" width="44" height="43" viewBox="22 553 44 43"><g transform="translate(43.4 574.1) rotate(45)"><path d="M-6.2 -12.5V15.6L0 22.6L6.2 15.6V-12.5A6.2 6.2 0 0 0 -6.2 -12.5Z M-6.2 15.2H6.2" fill="none" stroke="#d2d2d2" stroke-width="2.5" stroke-linecap="round" stroke-linejoin="round" /><path d="M-2.2 20L0 22.6L2.2 20Z" fill="#d2d2d2"/></g><g transform="translate(43.4 574.1) rotate(-45)"><rect x="-6.3" y="-19.2" width="12.6" height="38.4" rx="1" fill="#262d35" stroke="#d2d2d2" stroke-width="2.9"/><path d="M6.3 -5.5H1.5M6.3 0H3M6.3 5.5H1.5M6.3 11H3" fill="none" stroke="#d2d2d2" stroke-width="2.3" stroke-linecap="round" stroke-linejoin="round" stroke-linecap="butt"/><circle cx="0" cy="-12.3" r="1.9" fill="#d2d2d2"/></g></svg>
<svg class="i" style="left:24px;top:642px;" width="42" height="42" viewBox="24 642 42 42"><path d="M59.3 648.4C54.5 647.8 48 650.3 43.1 653.9L40.2 656.9L35.9 654.6L28.9 660.8L37.2 663.1L35.2 666.8L40.2 671.1L44.8 669.8L46.5 678L53.1 671.1L50.7 666.8C55.2 662 59.8 654.5 59.3 648.4Z" fill="none" stroke="#d2d2d2" stroke-width="2.7" stroke-linecap="round" stroke-linejoin="round" /><circle cx="48.1" cy="659.2" r="3.3" fill="#d2d2d2"/><path d="M28.9 678L32.9 669.8L37.2 674.7Z" fill="#d2d2d2" stroke="#d2d2d2" stroke-width="1" stroke-linejoin="round"/></svg>
<svg class="i" style="left:21px;top:733px;" width="47" height="35" viewBox="21 733 47 35"><path d="M28.6 737.5L44.2 740.3L59.9 737.5V757.8L44.2 760L28.6 757.8Z M44.2 740.3V760" fill="none" stroke="#d2d2d2" stroke-width="2.6" stroke-linecap="round" stroke-linejoin="round" stroke-linejoin="miter"/><path d="M24.5 741.8V763.2L41.5 764 M64 741.8V763.2L47 764" fill="none" stroke="#d2d2d2" stroke-width="2.6" stroke-linecap="round" stroke-linejoin="round" stroke-linejoin="miter" stroke-linecap="butt"/></svg>
<svg class="i" style="left:24px;top:819px;" width="40" height="40" viewBox="24 819 40 40"><path d="M43.9 822.8L27.2 829.3V849.5L43.9 855.5L60.6 849.5V829.3Z M27.2 829.3L43.9 835.4L60.6 829.3 M43.9 835.4V855.5" fill="none" stroke="#d2d2d2" stroke-width="2.9" stroke-linecap="round" stroke-linejoin="round" /></svg>
<svg class="i" style="left:26px;top:905px;" width="36" height="44" viewBox="26 905 36 44"><path d="M29.8 913.5A14.1 4.8 0 1 0 58 913.5A14.1 4.8 0 1 0 29.8 913.5Z M29.8 913.5V940.4A14.1 4.8 0 0 0 58 940.4V913.5 M29.8 922.3A14.1 4.8 0 0 0 58 922.3 M29.8 931.2A14.1 4.8 0 0 0 58 931.2" fill="none" stroke="#d2d2d2" stroke-width="2.8" stroke-linecap="round" stroke-linejoin="round" /></svg>
<svg class="i" style="left:26px;top:994px;" width="36" height="40" viewBox="26 994 36 40"><rect x="30" y="998.5" width="27.7" height="31.8" fill="none" stroke="#d2d2d2" stroke-width="2.9"/><path d="M36.2 1024.2H51.8" fill="none" stroke="#d2d2d2" stroke-width="2.6" stroke-linecap="round" stroke-linejoin="round" stroke-linecap="butt"/><text x="43.9" y="1019.3" font-family="Liberation Sans,sans-serif" font-size="20.5" text-anchor="middle" fill="#d2d2d2">$</text></svg>
<svg class="i" style="left:20px;top:1089px;" width="48" height="31" viewBox="20 1089 48 31"><rect x="23.3" y="1095" width="7.2" height="17" fill="none" stroke="#d2d2d2" stroke-width="2.6"/><rect x="57.8" y="1095" width="7" height="17" fill="none" stroke="#d2d2d2" stroke-width="2.6"/><path d="M30.5 1096.2H39C42 1094.8 45.5 1093.6 49.3 1093.8L57.8 1096.2 M41.5 1095.6L36.8 1099.4C34 1102 36 1106.5 39.8 1104.6L44.8 1101.4L53.9 1109.9 M30.5 1109.3L40.5 1115.6Q42.4 1116.8 44.3 1115.7L53.9 1109.9L57.8 1108.7" fill="none" stroke="#d2d2d2" stroke-width="2.6" stroke-linecap="round" stroke-linejoin="round" /></svg>
<svg class="i" style="left:20px;top:1166px;" width="40" height="42" viewBox="20 1166 40 42"><path d="M30.9 1170.4C35.5 1168.6 41 1170.8 43.8 1175C45.8 1178 46.2 1181.5 44.8 1184.5L55.7 1195.7C58.5 1199 56.5 1203.5 52.5 1203.8C50.8 1203.9 49.3 1203.4 48.1 1202.3L37.8 1192.1C33.5 1193.8 28.5 1192.5 25.5 1189.2C22.8 1186.2 21.9 1182 23.3 1178.3L31.2 1184.6L37.5 1178.2Z" fill="none" stroke="#d2d2d2" stroke-width="2.4" stroke-linecap="round" stroke-linejoin="round" /><circle cx="51.5" cy="1198.7" r="1.8" fill="#d2d2d2"/></svg>
<svg class="i" style="left:26px;top:1258px;" width="36" height="40" viewBox="26 1258 36 40"><rect x="30" y="1262.5" width="27.9" height="32" fill="none" stroke="#d2d2d2" stroke-width="2.9"/><path d="M36.5 1274H39.9V1284.2H36.5ZM42.3 1277.8H45.7V1284.2H42.3ZM48.1 1271.8H51.6V1284.2H48.1ZM34.9 1287H53V1289.4H34.9Z" fill="#d2d2d2"/></svg>
<svg class="i" style="left:24px;top:1360px;" width="38" height="12" viewBox="24 1360 38 12"><circle cx="30" cy="1366" r="4" fill="#bdbdbd"/><circle cx="42.7" cy="1366" r="4" fill="#bdbdbd"/><circle cx="55.3" cy="1366" r="4" fill="#bdbdbd"/></svg>
<svg class="i" style="left:2203px;top:1444px;" width="41" height="36" viewBox="2203 1444 41 36"><path d="M2220.6 1451.2Q2223.5 1446.5 2226.4 1451.2L2239.4 1472.5Q2242.3 1477.2 2236.8 1477.2L2210.2 1477.2Q2204.7 1477.2 2207.6 1472.5Z" fill="#fc4a2b"/><text x="2223.5" y="1470.9" font-family="Liberation Sans,sans-serif" font-size="21" font-weight="700" text-anchor="middle" fill="#fff">!</text></svg>
<svg class="i" style="left:2279px;top:1447px;" width="42" height="33" viewBox="2279 1447 42 33"><text x="2282" y="1474.3" font-family="Liberation Sans,sans-serif" font-size="28.5" letter-spacing="-1.6" fill="#222">Zia</text></svg>
<svg class="i" style="left:2355px;top:1446px;" width="41" height="34" viewBox="2355 1446 41 34"><path d="M2380.2 1450.6H2363.5Q2359.5 1450.6 2359.5 1454.6V1471.8Q2359.5 1475.8 2363.5 1475.8H2386.8Q2390.8 1475.8 2390.8 1471.8V1462.8" fill="none" stroke="#222" stroke-width="2.4" stroke-linecap="round" stroke-linejoin="round" /><path d="M2365.4 1457.4H2374.8M2365.4 1462.8H2374.8M2365.4 1469H2384.6" fill="none" stroke="#222" stroke-width="2.2" stroke-linecap="round" stroke-linejoin="round" stroke-linecap="butt"/><path d="M2381.4 1461.4L2390.6 1452.6" fill="none" stroke="#222" stroke-width="4.1" stroke-linecap="round" stroke-linejoin="round" stroke-linecap="butt"/><path d="M2378.6 1464.2L2379.6 1459.8L2383 1463.2Z" fill="#222"/></svg>
<svg class="i" style="left:2431px;top:1444px;" width="38" height="36" viewBox="2431 1444 38 36"><path d="M2440.5 1448.9H2459.5Q2464 1448.9 2464 1453.4V1465Q2464 1469.5 2459.5 1469.5H2443.5L2437.2 1475.6Q2436.1 1476.4 2436.1 1475V1453.4Q2436.1 1448.9 2440.5 1448.9Z" fill="none" stroke="#222" stroke-width="2.4" stroke-linecap="round" stroke-linejoin="round" /><path d="M2442.8 1456.1H2457.9M2442.8 1462.5H2457.9" fill="none" stroke="#222" stroke-width="2.4" stroke-linecap="round" stroke-linejoin="round" /></svg>
<svg class="i" style="left:2505px;top:1441px;" width="39" height="39" viewBox="2505 1441 39 39"><path d="M2519.6 1467.6A9.4 9.4 0 1 1 2529.6 1467.6V1472.2H2519.6Z" fill="none" stroke="#222" stroke-width="2.5" stroke-linecap="round" stroke-linejoin="round" /><path d="M2520.4 1476.2H2529.2M2524.6 1444.4V1446.2M2512.7 1448.1L2515.2 1450.6M2536.5 1448.1L2534 1450.6M2508.3 1458.3H2511.6M2537.5 1458.3H2540.9" fill="none" stroke="#222" stroke-width="2.3" stroke-linecap="round" stroke-linejoin="round" /></svg>
<svg class="i" style="left:2582px;top:1448px;" width="38" height="30" viewBox="2582 1448 38 30"><path d="M2592.6 1453.2Q2592.6 1451.0 2594.5 1452.1L2608.5 1460.8Q2610.4 1461.9 2608.5 1463.0L2594.5 1471.7Q2592.6 1472.8 2592.6 1470.6Z" fill="none" stroke="#222" stroke-width="2.5" stroke-linecap="round" stroke-linejoin="round" /><path d="M2609.2 1457.9A4.2 4.2 0 1 1 2609.2 1465.9M2608.1 1465.6V1473.8" fill="none" stroke="#222" stroke-width="2.3" stroke-linecap="round" stroke-linejoin="round" /><path d="M2589 1458.2A2.9 3.7 0 0 0 2589 1465.6Z" fill="#222"/></svg>
</div></div>
</body></html>
